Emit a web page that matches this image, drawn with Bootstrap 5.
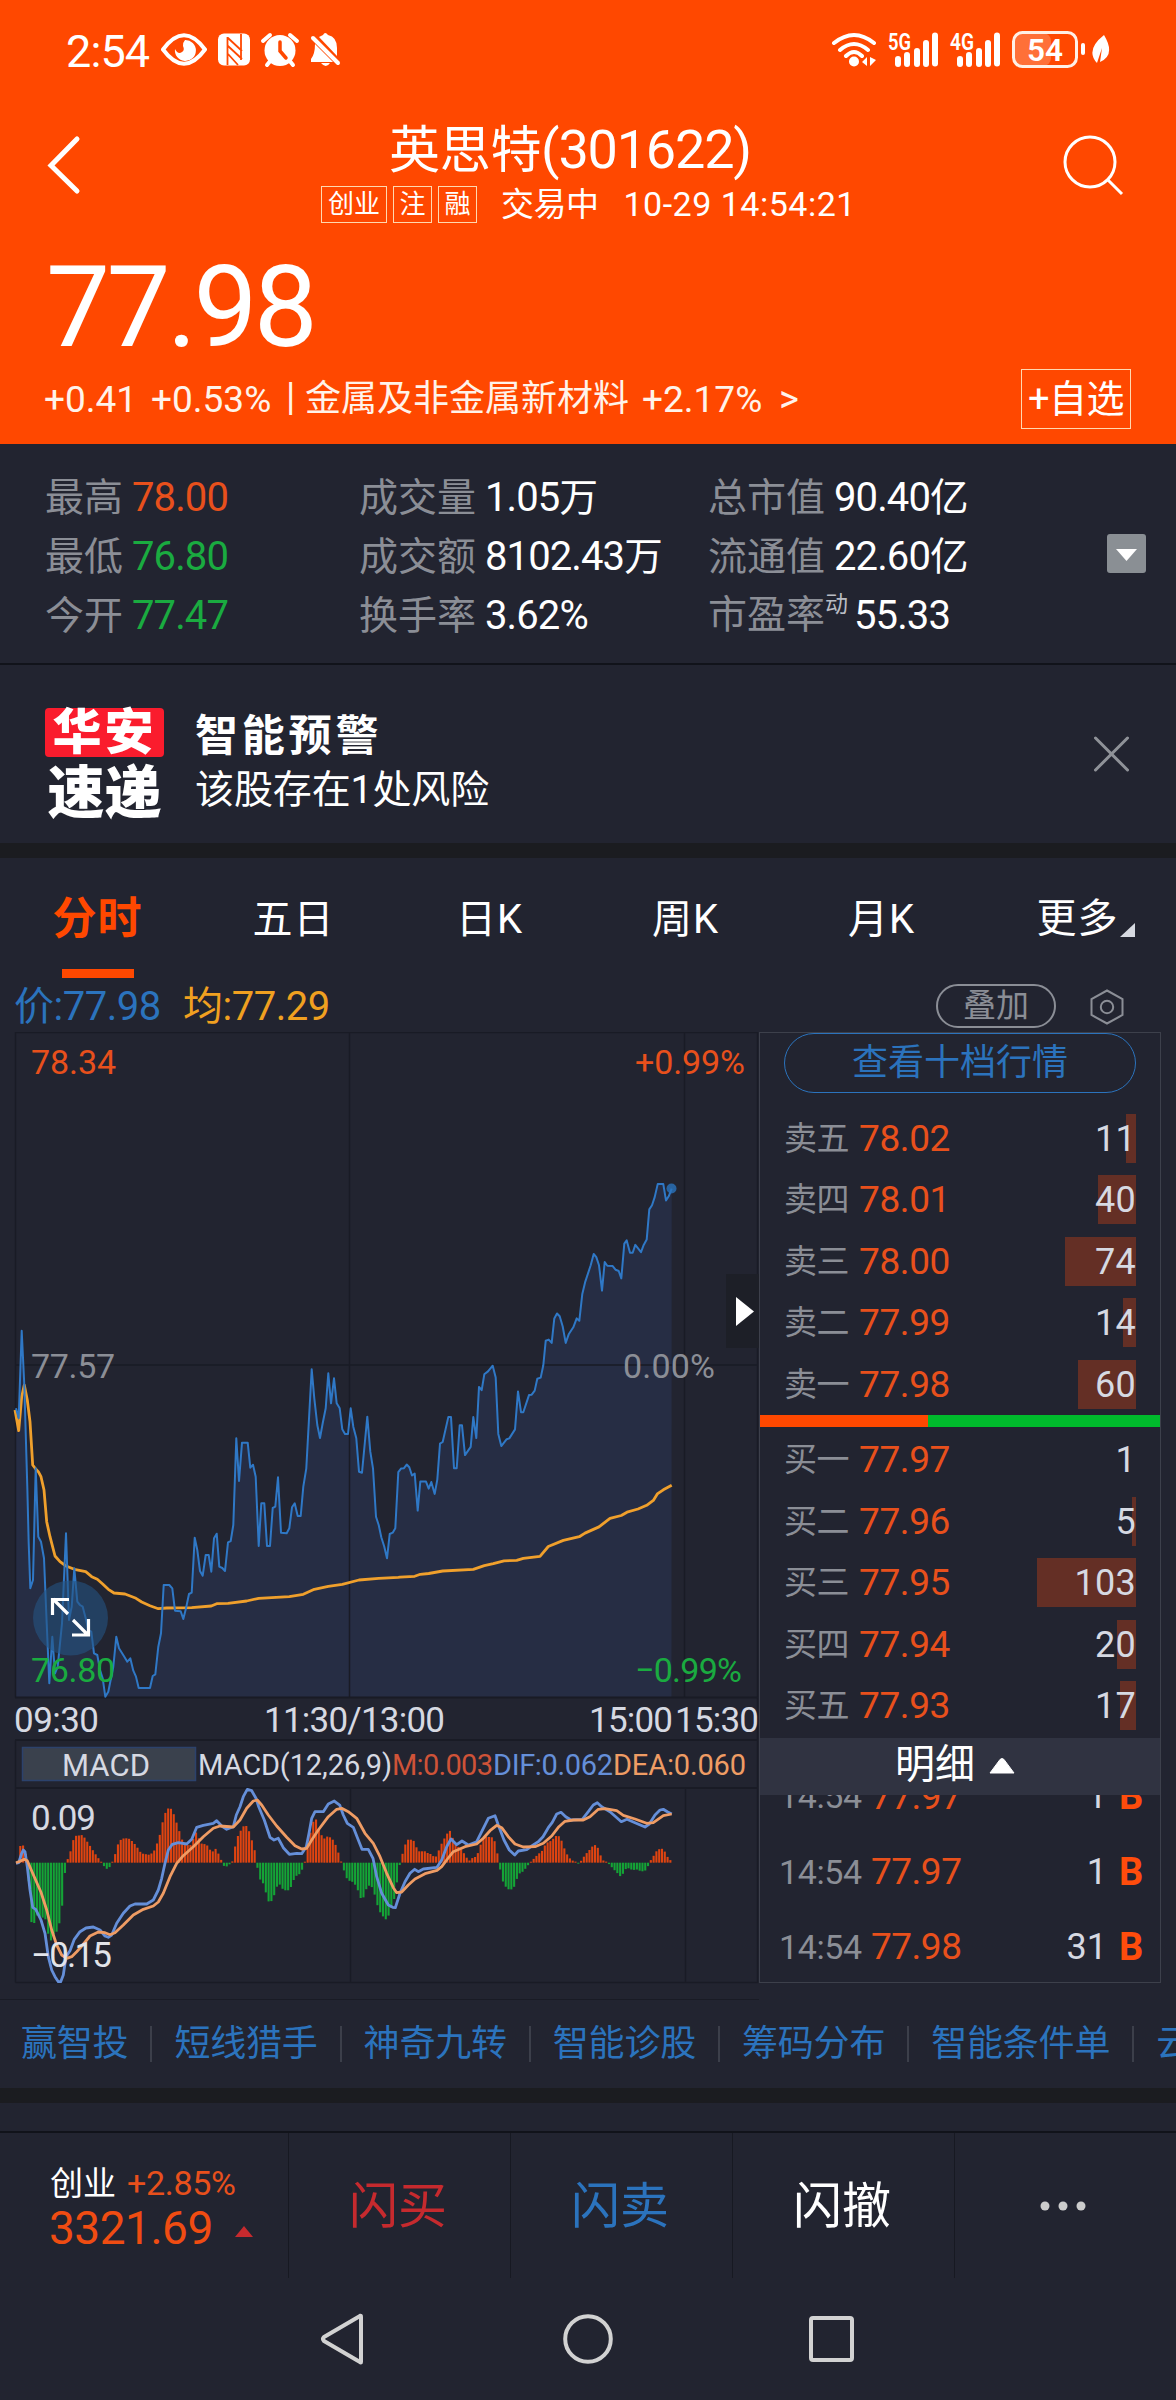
<!DOCTYPE html>
<html lang="zh-CN">
<head>
<meta charset="utf-8">
<meta name="viewport" content="width=device-width, initial-scale=1">
<title>英思特(301622)</title>
<link href="https://cdn.jsdelivr.net/npm/bootstrap@5.3.0/dist/css/bootstrap.min.css" rel="stylesheet">
<style>
:root{--up:#e8501c;--down:#1aab40;--blue:#2b73bd;--ink:#222430;--gray:#8b8e96;--line:#191b25}
body{background:var(--ink);color:#fff;width:1176px;height:2400px;overflow:hidden;font-family:Roboto,"Noto Sans CJK SC",sans-serif;line-height:1}
svg{display:block;flex:none}
.nw{white-space:nowrap}
.top-area{background:#ff4800;height:444px}
.statusbar{height:98px;padding:2px 66px 0 66px}
.clock{font-size:45px;letter-spacing:-.9px;width:95px;padding-top:2px}
.titlebar{height:138px}
.titlebar .t-main{font-size:51px;height:56px;line-height:58px;margin:23px 0 0 68px;letter-spacing:-.3px}
.titlebar .t-main b{font-weight:400;font-size:54px;letter-spacing:-1.2px}
.t-sub{height:38px;margin-top:8px;font-size:34px}
.tagbox{border:1px solid #ffd9b0;height:37px;line-height:34px;font-size:26px;text-align:center;margin-right:6px;width:39px}
.price-big{font-size:114px;height:133px;line-height:143px;padding-left:46px;letter-spacing:-3.6px}
.chg{height:60px;font-size:37px;color:#fff3ea}
.chg .n{letter-spacing:0}
.fav{border:1px solid #ffd9b0;width:110px;height:60px;line-height:59px;font-size:38px;letter-spacing:-.5px;text-align:center;color:#fff}
.stats{height:221px;padding-top:23px;border-bottom:2px solid #11131a}
.stats .ln{height:59px;line-height:61px;font-size:39px}
.stats .lb{color:var(--gray);margin-right:9px}
.stats .v{font-size:40px;letter-spacing:-.9px}
.stats .v i{font-style:normal;font-size:38.5px}
.up{color:var(--up)}.down{color:var(--down)}
.alertrow{height:178px}
.brand{width:119px}
.brand .r1{background:#fa1c2d;border-radius:4px;height:49px;line-height:50px;font-size:49px;font-weight:900;text-align:center;letter-spacing:3px}
.brand .r2{height:50px;line-height:51px;font-size:57px;font-weight:900;text-align:center;margin-top:11px}
.gapband{height:15px;background:#1b1c20}
.tabs{height:120px}
.tabs .tb{width:196px;text-align:center;font-size:40px;line-height:123px;height:120px;position:relative;letter-spacing:1px;padding-right:1px}
.tabs .on{color:#ff4800;font-weight:700;font-size:44px}
.tabs .on::after{content:"";position:absolute;left:50%;margin-left:-36px;width:72px;height:9px;bottom:0;background:#ff4800}
.info{height:54px;font-size:40px}
.pill-a{border:2px solid var(--gray);border-radius:22px;width:120px;height:44px;line-height:40px;font-size:33px;color:var(--gray);text-align:center}
.book{width:402px;height:951px;border:1px solid #3d404b;overflow:hidden}
.pill-b{border:1px solid var(--blue);border-radius:30px;width:352px;height:60px;line-height:59px;margin:0 0 14.5px 24px;color:var(--blue);font-size:36px;text-align:center}
.orow{height:61.5px;padding-left:24px}
.orow .k{color:var(--gray);font-size:33px;width:75px;letter-spacing:-.6px}
.orow .p{color:var(--up);font-size:37px;letter-spacing:-.4px;width:92px}
.orow .q{background:#642f25;color:#d6d9e2;font-size:36px;height:49px;line-height:50px;margin-left:auto;margin-right:24px;display:flex;justify-content:flex-end}
.orow .q span{margin-left:-80px;letter-spacing:.3px}
.ratio{height:12px;background:#00ba2c}
.ratio div{height:12px;width:42%;background:#ff4800}
.detail{height:57px;background:#303341;font-size:40px;margin-top:1px}
.ticks{height:187px;overflow:hidden}
.trow{height:75.4px;padding-left:19px;position:relative;top:-36px}
.trow .k{color:var(--gray);font-size:34px;width:92px;letter-spacing:-.4px}
.trow .p{color:var(--up);font-size:37px;letter-spacing:-.5px}
.trow .q{color:#d6d9e2;font-size:36px;width:60px;text-align:right;margin-left:auto}
.trow .s{color:#ff4c0c;font-weight:700;font-size:38px;width:24px;margin:0 17px 0 12px}
.links{height:91px;margin-top:-3px;padding-top:2px;overflow:hidden;font-size:36px;color:var(--blue);padding-left:21px}
.links span{letter-spacing:-.2px;line-height:50px}
.links i{width:2px;height:36px;background:#3c3f4a;margin:0 22px 0 22px;flex:none}
.dock{height:147px;border-top:2px solid #11131a;margin-top:28px}
.dock>div{height:145px;width:222px;border-left:1px solid #171922;font-size:49px;display:flex;align-items:center;justify-content:center;padding:2px 3px 0 0}
.dock>.idx{width:288px;border:0;display:block;padding:30px 0 0 50px}
.dock .l1{height:40px;font-size:33px}
.dock .l2{height:48px;font-size:46px;color:#f04c12;letter-spacing:-.5px;margin:1px 0 0 -1px}
.navkeys{height:122px;padding-left:319px}
svg text{font-family:Roboto,"Noto Sans CJK SC",sans-serif}
</style>
<script src="https://cdn.jsdelivr.net/npm/bootstrap@5.3.0/dist/js/bootstrap.bundle.min.js"></script>
</head>
<body>
<header class="top-area">
  <div class="statusbar d-flex align-items-center justify-content-between">
    <div class="d-flex align-items-center">
      <span class="clock">2:54</span>
      <svg width="180" height="36" viewBox="161 32 180 36" fill="#fff">
        <path d="M163 49.500Q184 21 205 49.500Q184 78 163 49.500Z" fill="none" stroke="#fff" stroke-width="4" stroke-linejoin="round"/>
        <path d="M185 40a10.500 10.500 0 1 1-10 9q3 6 7 3q3-2 1-6q0-4 2-6z"/>
        <path d="M224 33.500h20a6 6 0 0 1 6 6v20a6 6 0 0 1-6 6h-20a6 6 0 0 1-6-6v-20a6 6 0 0 1 6-6z"/>
        <path d="M227.500 37v28M228 38l14 13M228 46l14 13M228 54l10 11M241 34v26" stroke="#ff4800" stroke-width="1.800" fill="none"/>
        <circle cx="280" cy="50.500" r="15.500"/><path d="M263 41l7-6M297 41l-7-6M271 60l-4 5M289 60l4 5" stroke="#fff" stroke-width="4" stroke-linecap="round"/>
        <path d="M280 42v9l6 7" fill="none" stroke="#ff4800" stroke-width="3.500" stroke-linecap="round"/>
        <path d="M315 44q0 10-4 15v3h22zM319 37q2-1 4-2q2-4 5 0q9 2 9 13v8z"/><path d="M321 63h9q-4 6-9 0z"/>
        <path d="M313 38l25 25" stroke="#fff" stroke-width="4" stroke-linecap="round"/>
      </svg>
    </div>
    <svg width="280" height="40" viewBox="830 30 280 40" fill="#fff">
      <g fill="none" stroke="#fff" stroke-width="4" stroke-linecap="round"><path d="M834 43q20-16 40 0M840 50q14-12 28 0M846 56q8-8 16 0"/></g>
      <circle cx="854" cy="61.500" r="5"/><path d="M867 57v9l-5-4zM870 57v9l6-6z"/>
      <text x="888" y="50" font-size="23" font-weight="600" textLength="23" lengthAdjust="spacingAndGlyphs">5G</text>
      <text x="950" y="50" font-size="23" font-weight="600" textLength="24" lengthAdjust="spacingAndGlyphs">4G</text>
      <g id="sig"><rect x="895" y="56" width="6" height="11" rx="3"/><rect x="904" y="52" width="6" height="15" rx="3"/><rect x="914" y="48" width="6" height="19" rx="3"/><rect x="923" y="40" width="6" height="27" rx="3"/><rect x="932" y="32.500" width="6" height="34" rx="3"/></g>
      <use href="#sig" x="62"/>
      <rect x="1014" y="33" width="37" height="33" rx="8" fill="#ff7038"/>
      <rect x="1013.500" y="32.500" width="63" height="34" rx="9" fill="none" stroke="#fff0e6" stroke-width="3"/>
      <text x="1027" y="61" font-size="32" font-weight="600" textLength="36" lengthAdjust="spacingAndGlyphs">54</text>
      <rect x="1081" y="43" width="4" height="12" rx="2"/>
      <path d="M1104 35q12 20-4 27l2-14-5 15q-12-13 7-28z"/>
    </svg>
  </div>
  <div class="titlebar d-flex">
    <svg width="321" height="138" viewBox="0 98 321 138"><path d="M77 139L51 165.500L77 191" fill="none" stroke="#fff" stroke-width="5" stroke-linecap="round"/></svg>
    <div class="flex-grow-1">
      <div class="t-main nw">英思特<b>(301622)</b></div>
      <div class="t-sub d-flex align-items-center nw"><span class="tagbox" style="width:66px">创业</span><span class="tagbox">注</span><span class="tagbox">融</span><span style="margin-left:18px;font-size:33px;letter-spacing:-.5px">交易中</span><span style="margin-left:25px;letter-spacing:.5px">10-29 14:54:21</span></div>
    </div>
    <svg width="120" height="138" viewBox="1056 98 120 138"><g fill="none" stroke="#fff" stroke-width="3"><circle cx="1090" cy="162" r="25"/><path d="M1107 179l15 15"/></g></svg>
  </div>
  <div class="price-big">77.98</div>
  <div class="chg d-flex align-items-center nw">
    <span class="n" style="margin-left:44px;width:107px">+0.41</span><span class="n" style="width:135px">+0.53%</span><span style="width:19px;font-size:38px;margin-top:-4px">|</span><span style="font-size:36px;width:337px">金属及非金属新材料</span><span class="n" style="width:137px">+2.17%</span><span style="font-size:38px">&gt;</span>
    <div class="fav ms-auto" style="margin-right:45px">+自选</div>
  </div>
</header>

<section class="stats d-flex nw">
  <div style="width:313px;padding-left:45px">
    <div class="ln"><span class="lb">最高</span><span class="v up">78.00</span></div>
    <div class="ln"><span class="lb">最低</span><span class="v down">76.80</span></div>
    <div class="ln"><span class="lb">今开</span><span class="v down">77.47</span></div>
  </div>
  <div style="width:350px;padding-left:46px">
    <div class="ln"><span class="lb">成交量</span><span class="v">1.05<i>万</i></span></div>
    <div class="ln"><span class="lb">成交额</span><span class="v">8102.43<i>万</i></span></div>
    <div class="ln"><span class="lb">换手率</span><span class="v">3.62%</span></div>
  </div>
  <div style="width:444px;padding-left:45px">
    <div class="ln"><span class="lb">总市值</span><span class="v">90.40<i>亿</i></span></div>
    <div class="ln"><span class="lb">流通值</span><span class="v">22.60<i>亿</i></span></div>
    <div class="ln d-flex"><span class="lb me-0">市盈率</span><span style="font-size:23px;line-height:40px;color:#b9bcc4;width:29px">动</span><span class="v">55.33</span></div>
  </div>
  <svg width="39" height="39" viewBox="0 0 39 39" style="margin-top:67px"><rect width="39" height="39" rx="3" fill="#8a8f94"/><path d="M9 15h21l-10.500 12z" fill="#fff"/></svg>
</section>

<section class="alertrow d-flex align-items-center nw">
  <div class="brand" style="margin:18px 31px 0 45px"><div class="r1">华安</div><div class="r2">速递</div></div>
  <div>
    <div style="font-size:43px;font-weight:700;letter-spacing:3.800px;height:53px;line-height:52px;margin-top:20px">智能预警</div>
    <div style="font-size:39px;height:56px;line-height:55px;letter-spacing:-.1px">该股存在1处风险</div>
  </div>
  <svg class="ms-auto" width="35" height="36" viewBox="0 0 35 36" style="margin-right:47px"><path d="M1.500 2l32 32M33.500 2l-32 32" stroke="#8f9298" stroke-width="3" stroke-linecap="round"/></svg>
</section>
<div class="gapband"></div>

<nav class="tabs d-flex">
  <div class="tb on">分时</div><div class="tb">五日</div><div class="tb">日K</div><div class="tb">周K</div><div class="tb">月K</div>
  <div class="tb d-flex justify-content-center align-items-center">更多<svg width="15" height="14" viewBox="0 0 15 14" style="margin:23px -16px 0 1px"><path d="M15 0v14H0z" fill="#d6d9e0"/></svg></div>
</nav>
<div class="info d-flex align-items-center nw">
  <span style="margin-left:14px;width:169px;color:var(--blue);letter-spacing:-.5px;padding-top:3px">价:77.98</span><span style="color:#f0a020;letter-spacing:-.5px;padding-top:3px">均:77.29</span>
  <div class="pill-a ms-auto" style="margin-top:2px">叠加</div>
  <svg width="34" height="36" viewBox="0 0 34 36" style="margin:3px 52px 0 34px"><g fill="none" stroke="#8b8e96" stroke-width="2"><path d="M17 1.500l15.500 8.500v16L17 34.500L1.500 26V10z"/><circle cx="17" cy="18" r="6.200"/></g></svg>
</div>

<main class="d-flex">
  <svg id="chart" width="759" height="968" viewBox="0 1032 759 968">
    <g stroke="#191b25" stroke-width="1.500" fill="none">
      <path id="area" stroke="none" fill="#262d44"/>
      <path d="M15.500 1982.500V1740.500M15.500 1697.500V1032.500H757.500V1982.500H15.500M15.500 1365H757M349.500 1032V1697M684.500 1032V1697M350.500 1788V1982M685.500 1788V1982"/>
      <path d="M15 1697.500H758M15 1740H758M15 1788H758" stroke-width="2"/><path d="M0 1999.500H759" stroke-width="1"/>
    </g>
    <rect x="726" y="1274" width="33" height="74" fill="#1d1f27"/><path d="M736 1297v29l18-14.500z" fill="#fff"/>
    <polyline id="avg" fill="none" stroke="#f0a02c" stroke-width="2.800" stroke-linejoin="round"/>
    <polyline id="px" fill="none" stroke="#2f78c6" stroke-width="2" stroke-linejoin="round"/>
    <circle cx="671.500" cy="1188.500" r="5" fill="#2b73bd" opacity=".8"/>
    <circle cx="70.500" cy="1618" r="37.500" fill="#245382" opacity=".6"/>
    <path d="M68 1614L53 1599M52.500 1615V1599.500H69M73 1620L88 1635M72 1635H88.500V1619" fill="none" stroke="#fff" stroke-width="3.200"/>
    <g font-size="34" fill="#8b8e96">
      <text x="31" y="1074" fill="#e8501c" textLength="85">78.34</text>
      <text x="635" y="1074" fill="#e8501c" textLength="110">+0.99%</text>
      <text x="31" y="1378" textLength="84">77.57</text>
      <text x="623" y="1378" textLength="92">0.00%</text>
      <text x="31" y="1682" fill="#1aab40" textLength="84">76.80</text>
      <text x="635" y="1682" fill="#1aab40" textLength="107">−0.99%</text>
    </g>
    <g font-size="35" fill="#d6d9e2">
      <text x="14" y="1732" textLength="85">09:30</text><text x="264" y="1732" textLength="181">11:30/13:00</text><text x="589" y="1732" textLength="84">15:00</text><text x="675" y="1732" textLength="84">15:30</text>
    </g>
    <rect x="22.500" y="1747.500" width="173" height="33" fill="#3a414d" stroke="#2c426c" stroke-width="1.500"/>
    <g font-size="29" fill="#d6d9e2">
      <text x="62" y="1775.500" font-size="31" textLength="88">MACD</text>
      <text x="198" y="1775" textLength="194">MACD(12,26,9)</text>
      <text x="392" y="1775" textLength="101" fill="#cf5338">M:0.003</text>
      <text x="493" y="1775" textLength="120" fill="#658fd9">DIF:0.062</text>
      <text x="613" y="1775" textLength="133" fill="#ef9c64">DEA:0.060</text>
    </g>
    <g id="bars"></g>
    <text x="31" y="1830" font-size="35" fill="#d6d9e2" textLength="65">0.09</text>
    <polyline id="dif" fill="none" stroke="#658fd9" stroke-width="2.800" stroke-linejoin="round"/>
    <polyline id="dea" fill="none" stroke="#ef9c64" stroke-width="2.800" stroke-linejoin="round"/>
    <text x="31" y="1967" font-size="35" fill="#e2e4ea" textLength="81">−0.15</text>
  </svg>
  <aside class="book">
    <div class="pill-b">查看十档行情</div>
    <div id="sell"></div>
    <div class="ratio"><div></div></div>
    <div id="buy" style="padding-top:2px"></div>
    <div class="detail d-flex align-items-center"><span style="margin-left:135px;line-height:50px;margin-top:-2px">明细</span><svg width="26" height="16" viewBox="0 0 26 16" style="margin-left:14px"><path d="M1 15L11 1.500q2-2 4 0L25 15z" fill="#fff" stroke="#fff" stroke-linejoin="round"/></svg></div>
    <div class="ticks">
      <div class="trow d-flex align-items-center"><span class="k">14:54</span><span class="p">77.97</span><span class="q">1</span><span class="s">B</span></div>
      <div class="trow d-flex align-items-center"><span class="k">14:54</span><span class="p">77.97</span><span class="q">1</span><span class="s">B</span></div>
      <div class="trow d-flex align-items-center"><span class="k">14:54</span><span class="p">77.98</span><span class="q">31</span><span class="s">B</span></div>
    </div>
  </aside>
</main>

<div class="links d-flex align-items-center nw"><span>赢智投</span><i></i><span>短线猎手</span><i></i><span>神奇九转</span><i></i><span>智能诊股</span><i></i><span>筹码分布</span><i></i><span>智能条件单</span><i></i><span>云参数</span></div>
<div class="gapband"></div>
<div class="dock d-flex nw">
  <div class="idx"><div class="l1 d-flex align-items-center"><span style="width:77px">创业</span><span class="up" style="font-size:34px;letter-spacing:-.3px">+2.85%</span></div>
    <div class="l2 d-flex align-items-center">3321.69<svg width="18" height="11" viewBox="0 0 18 11" style="margin:6px 0 0 22px"><path d="M9 0l9 11H0z" fill="#c62a2e"/></svg></div></div>
  <div style="color:#c62a2e">闪买</div><div style="color:var(--blue)">闪卖</div><div>闪撤</div>
  <div><svg width="46" height="10" viewBox="0 0 46 10" fill="#ccc" style="margin:-2px 2px 0 0"><circle cx="5" cy="5" r="4.500"/><circle cx="23" cy="5" r="4.500"/><circle cx="41" cy="5" r="4.500"/></svg></div>
</div>
<div class="navkeys"><svg width="540" height="122" viewBox="319 2278 540 122" fill="none" stroke="#d2d2d2" stroke-width="4"><path d="M361 2317v45q0 1-1 0L324 2341q-2-2 0-4l36-21q1-1 1 1z" stroke-linejoin="round"/><circle cx="588" cy="2339" r="22.800"/><rect x="811" y="2318" width="41" height="42" rx="2"/></svg></div>

<script>
// order book rows: label, price, quantity, depth-bar width
function rows(id, list){
  document.getElementById(id).innerHTML = list.map(function(r){
    return '<div class="orow d-flex align-items-center"><span class="k">'+r[0]+'</span><span class="p">'+r[1]+'</span><div class="q" style="width:'+r[3]+'px"><span>'+r[2]+'</span></div></div>';
  }).join('');
}
rows('sell',[['卖五','78.02',11,10],['卖四','78.01',40,38],['卖三','78.00',74,71],['卖二','77.99',14,13],['卖一','77.98',60,58]]);
rows('buy',[['买一','77.97',1,0],['买二','77.96',5,4],['买三','77.95',103,99],['买四','77.94',20,19],['买五','77.93',17,16]]);

// each series is two halves (morning, afternoon) with its own origin and scale
function pts(str, x0, y0, sx, sy){
  return str.trim().split(/\s+/).map(function(p){var a=p.split(',');return [x0+a[0]/sx, y0+a[1]/sy];});
}
function join(a){return a.map(function(p){return p[0].toFixed(1)+','+p[1].toFixed(1);}).join(' ');}
var price = pts('48,355 56,385 65,122 73,285 82,590 86,760 91,895 99,870 107,535 115,740 123,755 132,805 140,1000 148,1180 157,1040 165,1150 173,1130 186,1000 198,730 207,990 215,950 223,835 232,935 240,945 248,950 257,985 265,1020 274,1025 282,1090 292,1095 300,1140 308,1165 316,1220 325,1205 340,1130 349,1040 357,1075 373,1100 382,1115 391,1105 400,1142 408,1160 416,1194 450,1194 458,1158 466,1153 475,1070 483,1030 491,885 508,885 517,895 525,962 542,964 550,987 558,955 567,912 575,908 584,743 592,780 600,843 608,857 617,795 626,795 634,845 642,745 650,731 658,830 667,834 675,843 684,757 692,753 700,705 709,445 717,573 726,458 743,458 751,533 759,524 767,560 776,768 784,640 793,640 801,768 810,768 818,654 826,650 834,562 843,728 860,730 868,715 876,652 884,640 893,678 902,678 910,590 919,535 935,238 943,325 952,405 960,444 968,400 977,355 985,250 993,340 1002,265 1010,340 1019,355 1027,418 1035,432 1044,432 1052,355 1060,410 1069,445 1077,545 1086,548 1102,380 1111,485 1119,535 1128,680 1136,705 1144,742 1153,770 1161,805 1169,732 1178,728 1186,715',0,1290,3,3)
 .concat(pts('55,912 63,903 72,902 80,893 88,900 96,920 104,915 113,1006 121,935 138,935 146,952 154,936 164,965 172,930 180,842 188,838 205,777 213,777 222,902 230,902 239,797 246,797 255,870 272,850 280,777 289,828 297,703 305,711 313,672 324,665 338,651 347,680 355,818 364,848 380,831 388,829 405,807 414,714 423,765 430,765 447,723 455,722 464,712 472,683 482,680 490,650 497,590 506,587 515,595 523,535 531,523 539,530 548,555 557,595 566,574 580,557 590,535 598,541 607,475 616,445 632,405 641,377 649,385 657,405 666,467 674,397 682,406 698,407 707,416 716,419 724,437 733,352 740,344 750,374 758,374 766,355 783,373 791,355 800,342 808,268 816,258 824,238 833,206 850,206 858,246 866,236 875,217',380,1100,3,2.45));
var avg = pts('45,360 56,422 65,320 73,285 82,330 90,395 98,525 107,537 115,545 123,560 132,600 140,695 150,740 165,798 180,815 198,828 223,838 257,845 275,860 292,868 308,882 325,898 342,909 375,912 408,925 425,936 450,947 475,956 500,954 575,953 634,948 650,941 684,940 740,933 776,925 868,920 910,913 943,898 985,889 1027,883 1077,870 1136,865 1195,862',0,1290,3,3)
 .concat(pts('60,1169 104,1167 121,1162 146,1160 188,1154 280,1150 313,1141 340,1136 372,1129 410,1128 430,1123 480,1118 505,1094 550,1079 598,1070 615,1061 657,1046 690,1025 724,1018 741,1010 774,1002 800,993 820,981 832,965 850,955 875,944',380,1100,3,2.45));
document.getElementById('px').setAttribute('points',join(price));
document.getElementById('avg').setAttribute('points',join(avg));
document.getElementById('area').setAttribute('d','M16,1697 L'+join(price)+' L671.5,1697Z');
var dif = pts('48,490 56,488 65,460 70,450 75,455 82,500 90,570 98,622 107,628 123,660 135,700 145,770 155,810 165,830 175,845 182,845 190,825 198,770 210,752 223,718 240,695 258,684 280,681 300,690 315,708 325,712 335,705 350,670 370,640 390,618 405,612 440,612 460,600 475,570 485,535 495,490 505,450 517,433 535,428 560,432 575,418 590,382 610,376 640,370 650,362 665,378 680,388 700,380 709,345 720,320 730,290 742,268 755,272 768,295 776,320 793,360 810,412 822,420 835,415 850,443 868,463 890,460 905,461 919,440 927,400 935,355 945,335 970,335 985,312 1003,303 1019,315 1030,345 1042,370 1060,382 1075,420 1086,448 1105,448 1119,475 1130,530 1145,580 1165,615 1178,622',0,1700,3,3)
 .concat(pts('46,623 60,580 75,545 90,520 104,508 115,515 130,507 171,502 185,480 200,440 213,417 230,434 246,423 265,435 290,425 305,395 325,355 345,347 355,375 372,420 388,450 404,465 415,453 440,449 455,438 475,425 489,410 505,383 517,367 530,342 543,337 557,350 573,360 607,358 625,335 640,315 652,308 665,320 690,335 707,350 724,365 741,358 765,368 795,381 808,372 825,345 840,330 850,328 862,335 875,342',380,1700,3,3));
var dea = pts('48,488 60,484 73,478 82,482 98,520 123,577 140,630 155,690 170,735 185,765 200,775 215,770 230,755 248,735 270,708 295,696 315,698 330,704 345,698 370,675 400,645 430,628 460,618 475,606 490,580 510,530 530,490 550,467 580,440 610,410 640,385 660,378 700,381 720,360 740,325 760,303 772,300 785,315 805,345 830,378 860,412 885,437 905,447 920,445 935,420 955,390 985,350 1010,328 1025,325 1045,335 1070,355 1095,400 1120,430 1140,470 1160,520 1180,563',0,1700,3,3)
 .concat(pts('50,578 65,576 85,555 105,537 135,521 171,511 185,500 200,480 220,455 255,440 290,432 310,415 330,392 350,376 365,383 385,410 405,432 430,441 465,440 490,430 515,408 535,382 555,364 580,360 610,360 630,350 655,328 675,326 710,332 730,346 765,357 800,370 820,368 850,347 875,342',380,1700,3,3));
document.getElementById('dif').setAttribute('points',join(dif));
document.getElementById('dea').setAttribute('points',join(dea));
// histogram: interpolate the envelope at every minute bar
var env = pts('52,494 60,438 73,436 80,475 84,500 90,632 98,695 107,645 123,650 140,660 148,732 165,695 173,695 182,650 190,590 197,486 207,472 223,408 248,405 265,430 282,456 299,480 307,490 315,503 323,508 333,496 341,478 357,422 374,414 390,417 407,435 424,460 450,465 466,448 474,420 482,397 491,350 500,330 508,322 517,330 533,378 550,430 565,436 575,435 584,400 592,395 600,430 617,433 626,440 634,458 650,444 658,470 667,486 675,505 684,495 692,491 700,480 709,412 717,405 726,382 735,376 743,380 759,432 767,462 776,532 793,555 801,595 810,612 826,578 835,545 845,565 860,573 870,568 885,530 902,520 912,494 919,470 927,420 935,380 944,352 952,365 960,400 977,420 985,402 993,418 1002,420 1010,445 1019,468 1027,498 1044,545 1052,540 1069,558 1086,605 1102,558 1111,556 1119,565 1136,630 1153,655',0,1700,3,3)
 .concat(pts('21,660 38,612 46,585 54,522 62,480 71,450 80,420 90,418 104,424 113,454 138,454 146,462 154,462 163,472 171,468 180,440 188,425 196,410 205,395 213,391 222,430 246,450 255,465 263,478 272,484 280,468 290,474 297,445 313,410 338,412 347,430 356,483 364,528 372,555 388,570 397,567 406,556 414,523 430,514 447,492 456,482 472,465 489,450 497,430 514,422 531,405 540,411 548,430 557,457 573,480 590,486 598,490 607,477 615,465 632,446 641,434 650,437 657,450 666,480 682,486 690,496 707,514 724,532 733,512 741,503 758,510 774,508 783,515 800,510 808,487 816,475 833,448 850,446 858,462 866,477 877,484',380,1700,3,3));
var zero = 1700+488/3, html = '', k = 0;
for (var x = 17.5; x <= 672; x += 2.79){
  while (k < env.length-2 && env[k+1][0] < x) k++;
  var a = env[k], b = env[k+1], t = Math.max(0,Math.min(1,(x-a[0])/(b[0]-a[0]))), y = a[1]+(b[1]-a[1])*t;
  var h = Math.max(1, Math.abs(y-zero));
  html += '<rect x="'+(x-1.05).toFixed(2)+'" y="'+(y<zero?zero-h:zero).toFixed(1)+'" width="2.1" height="'+h.toFixed(1)+'" fill="'+(y<zero?'#e04410':'#14a436')+'"/>';
}
document.getElementById('bars').innerHTML = html;
</script>
</body>
</html>
